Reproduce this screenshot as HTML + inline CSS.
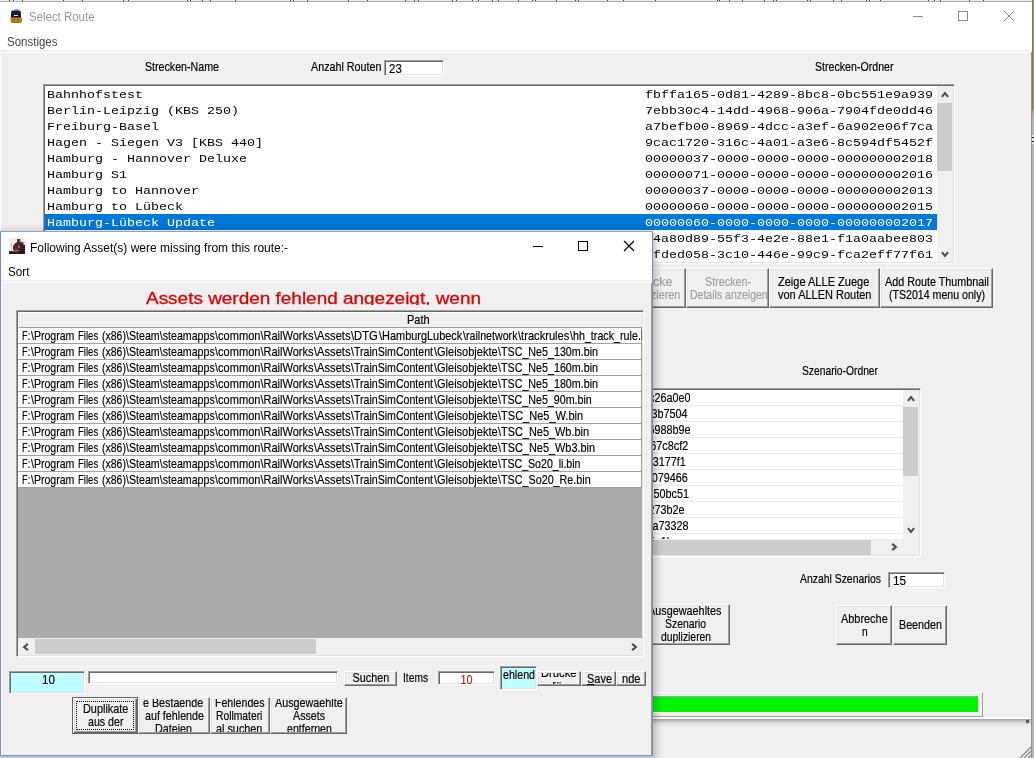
<!DOCTYPE html>
<html lang="de"><head><meta charset="utf-8"><title>Select Route</title>
<style>
html,body{margin:0;padding:0}
body{width:1034px;height:758px;overflow:hidden;background:#f0f0f0;position:relative;font-family:'Liberation Sans',sans-serif;color:#000}
div,span.t,svg{position:absolute;box-sizing:border-box}
.t{white-space:pre;-webkit-text-stroke:.2px currentColor}
.sunk{border:1px solid;border-color:#a0a0a0 #fff #fff #a0a0a0;box-shadow:inset 1px 1px 0 #696969,inset -1px -1px 0 #e3e3e3}
.btn{background:#f0f0f0;border:1px solid;border-color:#fff #696969 #696969 #fff;box-shadow:inset -1px -1px 0 #a0a0a0,inset 1px 1px 0 #e3e3e3}
.btn.def{border-color:#646464;box-shadow:inset 1px 1px 0 #fff,inset -1px -1px 0 #696969,inset -2px -2px 0 #a0a0a0,inset 2px 2px 0 #e3e3e3}
</style></head>
<body>
<div style="left:0;top:0;width:1034px;height:758px;will-change:transform">
<div style="left:0px;top:0px;width:1034px;height:2px;background:#fff"></div>
<div style="left:0px;top:0px;width:1032px;height:1px;background:#ececec"></div>
<div style="left:0px;top:1px;width:1032px;height:1px;background:#adadb3"></div>
<div style="left:9px;top:0px;width:1px;height:1px;background:#444"></div>
<div style="left:13px;top:0px;width:1px;height:1px;background:#444"></div>
<div style="left:22px;top:0px;width:1px;height:1px;background:#444"></div>
<div style="left:63px;top:0px;width:1px;height:1px;background:#444"></div>
<div style="left:82px;top:0px;width:1px;height:1px;background:#444"></div>
<div style="left:123px;top:0px;width:1px;height:1px;background:#444"></div>
<div style="left:128px;top:0px;width:1px;height:1px;background:#444"></div>
<div style="left:187px;top:0px;width:1px;height:1px;background:#444"></div>
<div style="left:190px;top:0px;width:1px;height:1px;background:#444"></div>
<div style="left:202px;top:0px;width:1px;height:1px;background:#444"></div>
<div style="left:210px;top:0px;width:1px;height:1px;background:#444"></div>
<div style="left:235px;top:0px;width:1px;height:1px;background:#444"></div>
<div style="left:290px;top:0px;width:1px;height:1px;background:#444"></div>
<div style="left:293px;top:0px;width:1px;height:1px;background:#444"></div>
<div style="left:307px;top:0px;width:1px;height:1px;background:#444"></div>
<div style="left:348px;top:0px;width:1px;height:1px;background:#444"></div>
<div style="left:367px;top:0px;width:1px;height:1px;background:#444"></div>
<div style="left:405px;top:0px;width:1px;height:1px;background:#444"></div>
<div style="left:414px;top:0px;width:1px;height:1px;background:#444"></div>
<div style="left:418px;top:0px;width:1px;height:1px;background:#444"></div>
<div style="left:452px;top:0px;width:1px;height:1px;background:#444"></div>
<div style="left:456px;top:0px;width:1px;height:1px;background:#444"></div>
<div style="left:472px;top:0px;width:1px;height:1px;background:#444"></div>
<div style="left:478px;top:0px;width:1px;height:1px;background:#444"></div>
<div style="left:492px;top:0px;width:1px;height:1px;background:#444"></div>
<div style="left:498px;top:0px;width:1px;height:1px;background:#444"></div>
<div style="left:518px;top:0px;width:1px;height:1px;background:#444"></div>
<div style="left:532px;top:0px;width:1px;height:1px;background:#444"></div>
<div style="left:535px;top:0px;width:1px;height:1px;background:#444"></div>
<div style="left:556px;top:0px;width:1px;height:1px;background:#444"></div>
<div style="left:575px;top:0px;width:1px;height:1px;background:#444"></div>
<div style="left:578px;top:0px;width:1px;height:1px;background:#444"></div>
<div style="left:607px;top:0px;width:1px;height:1px;background:#444"></div>
<div style="left:623px;top:0px;width:1px;height:1px;background:#444"></div>
<div style="left:655px;top:0px;width:1px;height:1px;background:#444"></div>
<div style="left:717px;top:0px;width:1px;height:1px;background:#444"></div>
<div style="left:719px;top:0px;width:1px;height:1px;background:#444"></div>
<div style="left:729px;top:0px;width:1px;height:1px;background:#444"></div>
<div style="left:742px;top:0px;width:1px;height:1px;background:#444"></div>
<div style="left:764px;top:0px;width:1px;height:1px;background:#444"></div>
<div style="left:773px;top:0px;width:1px;height:1px;background:#444"></div>
<div style="left:776px;top:0px;width:1px;height:1px;background:#444"></div>
<div style="left:807px;top:0px;width:1px;height:1px;background:#444"></div>
<div style="left:810px;top:0px;width:1px;height:1px;background:#444"></div>
<div style="left:833px;top:0px;width:1px;height:1px;background:#444"></div>
<div style="left:841px;top:0px;width:1px;height:1px;background:#444"></div>
<div style="left:866px;top:0px;width:1px;height:1px;background:#444"></div>
<div style="left:869px;top:0px;width:1px;height:1px;background:#444"></div>
<div style="left:880px;top:0px;width:1px;height:1px;background:#444"></div>
<div style="left:928px;top:0px;width:1px;height:1px;background:#444"></div>
<div style="left:934px;top:0px;width:1px;height:1px;background:#444"></div>
<div style="left:940px;top:0px;width:1px;height:1px;background:#444"></div>
<div style="left:969px;top:0px;width:1px;height:1px;background:#444"></div>
<div style="left:983px;top:0px;width:1px;height:1px;background:#444"></div>
<div style="left:0px;top:2px;width:1032px;height:48px;background:#fff"></div>
<div style="left:0px;top:50px;width:1031px;height:2px;background:#f2f2f2"></div>
<div style="left:0px;top:52px;width:1031px;height:1px;background:#fcfcfc"></div>
<div style="left:0px;top:52px;width:1px;height:667px;background:#fafafa"></div>
<div style="left:1032px;top:0px;width:2px;height:758px;background:linear-gradient(#a3976c 0,#a3976c 104px,#b6b6b6 122px,#b6b6b6 100%)"></div>
<div style="left:1032px;top:0px;width:1px;height:110px;background:#7f7653"></div>
<div style="left:1031px;top:52px;width:1px;height:706px;background:#929292"></div>
<div style="left:1032px;top:135px;width:2px;height:9px;background:#e8e8e8"></div>
<div style="left:1032px;top:137px;width:2px;height:1px;background:#111"></div>
<div style="left:1032px;top:141px;width:2px;height:1px;background:#111"></div>
<svg style="left:10px;top:9px" width="13" height="15" viewBox="0 0 13 15"><rect x="4" y="0" width="5" height="2.5" rx="1" fill="#a9adb8"/><path d="M1 3.5Q1 1.6 3 1.6H9Q11 1.6 11 3.5V8.5H1z" fill="#141d47"/><rect x="0.5" y="8" width="11.5" height="5.6" rx="1.2" fill="#bf881c"/><rect x="1.5" y="13" width="9.5" height="1" fill="#6b4a12" opacity=".7"/><circle cx="3.7" cy="11" r="1.1" fill="#8a5308"/><circle cx="8.2" cy="11" r="1.1" fill="#8a5308"/><rect x="4" y="6" width="4" height="1" fill="#e3e6ee"/><rect x="1" y="7.5" width="10" height="1" fill="#0c1230"/></svg>
<span class="t" style="left:29.00px;top:11.14px;font-size:12px;line-height:13.40px;color:#999;-webkit-text-stroke:0;transform:scaleX(0.9532);transform-origin:0 0;">Select Route</span><span class="t" style="left:7.00px;top:36.14px;font-size:12px;line-height:13.40px;color:#444;-webkit-text-stroke:0;transform:scaleX(0.9582);transform-origin:0 0;">Sonstiges</span><svg style="left:905px;top:4px" width="120" height="26" viewBox="0 0 120 26"><g stroke="#8a8a8a" stroke-width="1" fill="none"><path d="M8 12.5H18"/><rect x="53.5" y="7.5" width="9" height="9"/><path d="M99 7L109 17M109 7L99 17"/></g></svg>
<span class="t" style="left:144.50px;top:58.78px;font-size:13.5px;line-height:15.08px;transform:scaleX(0.7889);transform-origin:0 0;">Strecken-Name</span><span class="t" style="left:310.50px;top:58.78px;font-size:13.5px;line-height:15.08px;transform:scaleX(0.7960);transform-origin:0 0;">Anzahl Routen</span><span class="t" style="left:815.00px;top:58.78px;font-size:13.5px;line-height:15.08px;transform:scaleX(0.7866);transform-origin:0 0;">Strecken-Ordner</span><div class="sunk" style="left:384px;top:60px;width:60px;height:16px;background:#fff;"></div>
<span class="t" style="left:389.00px;top:60.78px;font-size:13.5px;line-height:15.08px;transform:scaleX(0.8516);transform-origin:0 0;">23</span><div class="sunk" style="left:43px;top:84px;width:912px;height:180px;background:#fff;"></div>
<div style="left:45px;top:86px;width:892px;height:176px;overflow:hidden;"><span class="t" style="left:2.00px;top:2.34px;font-size:11.6px;line-height:13.14px;font-family:'Liberation Mono',monospace;-webkit-text-stroke:0;transform:scaleX(1.1494);transform-origin:0 0;">Bahnhofstest</span><span class="t" style="left:600.00px;top:2.34px;font-size:11.6px;line-height:13.14px;font-family:'Liberation Mono',monospace;-webkit-text-stroke:0;transform:scaleX(1.1494);transform-origin:0 0;">fbffa165-0d81-4289-8bc8-0bc551e9a939</span><span class="t" style="left:2.00px;top:18.34px;font-size:11.6px;line-height:13.14px;font-family:'Liberation Mono',monospace;-webkit-text-stroke:0;transform:scaleX(1.1494);transform-origin:0 0;">Berlin-Leipzig (KBS 250)</span><span class="t" style="left:600.00px;top:18.34px;font-size:11.6px;line-height:13.14px;font-family:'Liberation Mono',monospace;-webkit-text-stroke:0;transform:scaleX(1.1494);transform-origin:0 0;">7ebb30c4-14dd-4968-906a-7904fde0dd46</span><span class="t" style="left:2.00px;top:34.34px;font-size:11.6px;line-height:13.14px;font-family:'Liberation Mono',monospace;-webkit-text-stroke:0;transform:scaleX(1.1494);transform-origin:0 0;">Freiburg-Basel</span><span class="t" style="left:600.00px;top:34.34px;font-size:11.6px;line-height:13.14px;font-family:'Liberation Mono',monospace;-webkit-text-stroke:0;transform:scaleX(1.1494);transform-origin:0 0;">a7befb00-8969-4dcc-a3ef-6a902e06f7ca</span><span class="t" style="left:2.00px;top:50.34px;font-size:11.6px;line-height:13.14px;font-family:'Liberation Mono',monospace;-webkit-text-stroke:0;transform:scaleX(1.1494);transform-origin:0 0;">Hagen - Siegen V3 [KBS 440]</span><span class="t" style="left:600.00px;top:50.34px;font-size:11.6px;line-height:13.14px;font-family:'Liberation Mono',monospace;-webkit-text-stroke:0;transform:scaleX(1.1494);transform-origin:0 0;">9cac1720-316c-4a01-a3e6-8c594df5452f</span><span class="t" style="left:2.00px;top:66.34px;font-size:11.6px;line-height:13.14px;font-family:'Liberation Mono',monospace;-webkit-text-stroke:0;transform:scaleX(1.1494);transform-origin:0 0;">Hamburg - Hannover Deluxe</span><span class="t" style="left:600.00px;top:66.34px;font-size:11.6px;line-height:13.14px;font-family:'Liberation Mono',monospace;-webkit-text-stroke:0;transform:scaleX(1.1494);transform-origin:0 0;">00000037-0000-0000-0000-000000002018</span><span class="t" style="left:2.00px;top:82.34px;font-size:11.6px;line-height:13.14px;font-family:'Liberation Mono',monospace;-webkit-text-stroke:0;transform:scaleX(1.1494);transform-origin:0 0;">Hamburg S1</span><span class="t" style="left:600.00px;top:82.34px;font-size:11.6px;line-height:13.14px;font-family:'Liberation Mono',monospace;-webkit-text-stroke:0;transform:scaleX(1.1494);transform-origin:0 0;">00000071-0000-0000-0000-000000002016</span><span class="t" style="left:2.00px;top:98.34px;font-size:11.6px;line-height:13.14px;font-family:'Liberation Mono',monospace;-webkit-text-stroke:0;transform:scaleX(1.1494);transform-origin:0 0;">Hamburg to Hannover</span><span class="t" style="left:600.00px;top:98.34px;font-size:11.6px;line-height:13.14px;font-family:'Liberation Mono',monospace;-webkit-text-stroke:0;transform:scaleX(1.1494);transform-origin:0 0;">00000037-0000-0000-0000-000000002013</span><span class="t" style="left:2.00px;top:114.34px;font-size:11.6px;line-height:13.14px;font-family:'Liberation Mono',monospace;-webkit-text-stroke:0;transform:scaleX(1.1494);transform-origin:0 0;">Hamburg to Lübeck</span><span class="t" style="left:600.00px;top:114.34px;font-size:11.6px;line-height:13.14px;font-family:'Liberation Mono',monospace;-webkit-text-stroke:0;transform:scaleX(1.1494);transform-origin:0 0;">00000060-0000-0000-0000-000000002015</span><div style="left:0px;top:128px;width:892px;height:16px;background:#0078d7"></div>
<span class="t" style="left:2.00px;top:130.34px;font-size:11.6px;line-height:13.14px;color:#fff;font-family:'Liberation Mono',monospace;-webkit-text-stroke:0;transform:scaleX(1.1494);transform-origin:0 0;">Hamburg-Lübeck Update</span><span class="t" style="left:600.00px;top:130.34px;font-size:11.6px;line-height:13.14px;color:#fff;font-family:'Liberation Mono',monospace;-webkit-text-stroke:0;transform:scaleX(1.1494);transform-origin:0 0;">00000060-0000-0000-0000-000000002017</span><span class="t" style="left:2.00px;top:146.34px;font-size:11.6px;line-height:13.14px;font-family:'Liberation Mono',monospace;-webkit-text-stroke:0;transform:scaleX(1.1494);transform-origin:0 0;">Köln - Düsseldorf</span><span class="t" style="left:600.00px;top:146.34px;font-size:11.6px;line-height:13.14px;font-family:'Liberation Mono',monospace;-webkit-text-stroke:0;transform:scaleX(1.1494);transform-origin:0 0;">c4a80d89-55f3-4e2e-88e1-f1a0aabee803</span><span class="t" style="left:2.00px;top:162.34px;font-size:11.6px;line-height:13.14px;font-family:'Liberation Mono',monospace;-webkit-text-stroke:0;transform:scaleX(1.1494);transform-origin:0 0;">Mannheim - Karlsruhe</span><span class="t" style="left:600.00px;top:162.34px;font-size:11.6px;line-height:13.14px;font-family:'Liberation Mono',monospace;-webkit-text-stroke:0;transform:scaleX(1.1494);transform-origin:0 0;">5fded058-3c10-446e-99c9-fca2eff77f61</span></div>
<div style="left:937px;top:86px;width:16px;height:176px;background:#f0f0f0"></div>
<div style="left:937px;top:103px;width:15px;height:68px;background:#cdcdcd"></div>
<svg style="left:936.7px;top:87px" width="16" height="16" viewBox="0 0 16 16"><polyline points="4.90,9.90 8.00,6.10 11.10,9.90" fill="none" stroke="#505050" stroke-width="2.1"/></svg>
<svg style="left:936.6px;top:246px" width="16" height="16" viewBox="0 0 16 16"><polyline points="4.90,6.10 8.00,9.90 11.10,6.10" fill="none" stroke="#505050" stroke-width="2.1"/></svg>
<div class="btn" style="left:618px;top:268px;width:68px;height:40px;"></div>
<div style="left:620px;top:270px;width:64px;height:36px;overflow:hidden;"><span class="t" style="left:10.00px;top:3.78px;font-size:13.5px;line-height:15.08px;color:#a0a0a0;transform:scaleX(0.9305);transform-origin:0 0;">Strecke</span><span class="t" style="left:-5.30px;top:16.78px;font-size:13.5px;line-height:15.08px;color:#a0a0a0;transform:scaleX(0.8000);transform-origin:100% 0;">duplizieren</span></div>
<div class="btn" style="left:686px;top:268px;width:83px;height:40px;"></div>
<div style="left:688px;top:270px;width:79px;height:36px;overflow:hidden;"><span class="t" style="left:17.20px;top:3.78px;font-size:13.5px;line-height:15.08px;color:#a0a0a0;transform:scaleX(0.7978);transform-origin:0 0;">Strecken-</span><span class="t" style="left:1.50px;top:16.78px;font-size:13.5px;line-height:15.08px;color:#a0a0a0;transform:scaleX(0.7783);transform-origin:0 0;">Details anzeigen</span></div>
<div class="btn" style="left:769px;top:268px;width:111px;height:40px;"></div>
<div style="left:771px;top:270px;width:107px;height:36px;overflow:hidden;"><span class="t" style="left:7.30px;top:3.78px;font-size:13.5px;line-height:15.08px;transform:scaleX(0.8163);transform-origin:0 0;">Zeige ALLE Zuege</span><span class="t" style="left:7.30px;top:16.78px;font-size:13.5px;line-height:15.08px;transform:scaleX(0.8133);transform-origin:0 0;">von ALLEN Routen</span></div>
<div class="btn" style="left:880px;top:268px;width:113px;height:40px;"></div>
<div style="left:882px;top:270px;width:109px;height:36px;overflow:hidden;"><span class="t" style="left:3.00px;top:3.78px;font-size:13.5px;line-height:15.08px;transform:scaleX(0.7979);transform-origin:0 0;">Add Route Thumbnail</span><span class="t" style="left:7.00px;top:16.78px;font-size:13.5px;line-height:15.08px;transform:scaleX(0.7849);transform-origin:0 0;">(TS2014 menu only)</span></div>
<span class="t" style="left:801.50px;top:362.78px;font-size:13.5px;line-height:15.08px;transform:scaleX(0.7615);transform-origin:0 0;">Szenario-Ordner</span><div class="sunk" style="left:330px;top:388px;width:591px;height:169px;background:#fff;"></div>
<div style="left:332px;top:390px;width:571px;height:149px;overflow:hidden;"><div style="left:0px;top:0px;width:571px;height:149px;background:#fff"></div>
<div style="left:0px;top:15px;width:571px;height:1px;background:#ebebeb"></div>
<span class="t" style="left:128.06px;top:-0.22px;font-size:13.5px;line-height:15.08px;transform:scaleX(0.8000);transform-origin:100% 0;">8f3e2a10-4b5c-4d6e-9f70-7f1c26a0e0</span><div style="left:0px;top:31px;width:571px;height:1px;background:#ebebeb"></div>
<span class="t" style="left:128.05px;top:15.78px;font-size:13.5px;line-height:15.08px;transform:scaleX(0.8000);transform-origin:100% 0;">8f3e2a10-4b5c-4d6e-9f70-d9a3b7504</span><div style="left:0px;top:47px;width:571px;height:1px;background:#ebebeb"></div>
<span class="t" style="left:131.05px;top:31.78px;font-size:13.5px;line-height:15.08px;transform:scaleX(0.8000);transform-origin:100% 0;">8f3e2a10-4b5c-4d6e-9f70-a06988b9e</span><div style="left:0px;top:63px;width:571px;height:1px;background:#ebebeb"></div>
<span class="t" style="left:133.83px;top:47.78px;font-size:13.5px;line-height:15.08px;transform:scaleX(0.8000);transform-origin:100% 0;">8f3e2a10-4b5c-4d6e-9f70-e267c8cf2</span><div style="left:0px;top:79px;width:571px;height:1px;background:#ebebeb"></div>
<span class="t" style="left:130.31px;top:63.78px;font-size:13.5px;line-height:15.08px;transform:scaleX(0.8000);transform-origin:100% 0;">8f3e2a10-4b5c-4d6e-9f70-b723177f1</span><div style="left:0px;top:95px;width:571px;height:1px;background:#ebebeb"></div>
<span class="t" style="left:129.31px;top:79.78px;font-size:13.5px;line-height:15.08px;transform:scaleX(0.8000);transform-origin:100% 0;">8f3e2a10-4b5c-4d6e-9f70-4c1079466</span><div style="left:0px;top:111px;width:571px;height:1px;background:#ebebeb"></div>
<span class="t" style="left:134.06px;top:95.78px;font-size:13.5px;line-height:15.08px;transform:scaleX(0.8000);transform-origin:100% 0;">8f3e2a10-4b5c-4d6e-9f70-fe150bc51</span><div style="left:0px;top:127px;width:571px;height:1px;background:#ebebeb"></div>
<span class="t" style="left:125.05px;top:111.78px;font-size:13.5px;line-height:15.08px;transform:scaleX(0.8000);transform-origin:100% 0;">8f3e2a10-4b5c-4d6e-9f70-09a273b2e</span><div style="left:0px;top:143px;width:571px;height:1px;background:#ebebeb"></div>
<span class="t" style="left:128.55px;top:127.78px;font-size:13.5px;line-height:15.08px;transform:scaleX(0.8000);transform-origin:100% 0;">8f3e2a10-4b5c-4d6e-9f70-5d1a73328</span><div style="left:0px;top:159px;width:571px;height:1px;background:#ebebeb"></div>
<span class="t" style="left:117.31px;top:143.78px;font-size:13.5px;line-height:15.08px;transform:scaleX(0.8000);transform-origin:100% 0;">8f3e2a10-4b5c-4d6e-9f70-0c2a-5e1b</span></div>
<div style="left:903px;top:390px;width:16px;height:149px;background:#f0f0f0"></div>
<div style="left:903px;top:407px;width:15px;height:69px;background:#cdcdcd"></div>
<svg style="left:902.6px;top:391px" width="16" height="16" viewBox="0 0 16 16"><polyline points="4.90,9.90 8.00,6.10 11.10,9.90" fill="none" stroke="#505050" stroke-width="2.1"/></svg>
<svg style="left:902.6px;top:522px" width="16" height="16" viewBox="0 0 16 16"><polyline points="4.90,6.10 8.00,9.90 11.10,6.10" fill="none" stroke="#505050" stroke-width="2.1"/></svg>
<div style="left:332px;top:539px;width:587px;height:16px;background:#f0f0f0"></div>
<div style="left:349px;top:540px;width:522px;height:15px;background:#cdcdcd"></div>
<svg style="left:886px;top:538.6px" width="16" height="16" viewBox="0 0 16 16"><polyline points="6.10,4.90 9.90,8.00 6.10,11.10" fill="none" stroke="#505050" stroke-width="2.1"/></svg>
<span class="t" style="left:800.00px;top:570.78px;font-size:13.5px;line-height:15.08px;transform:scaleX(0.7710);transform-origin:0 0;">Anzahl Szenarios</span><div class="sunk" style="left:888px;top:572px;width:57px;height:16px;background:#fff;"></div>
<span class="t" style="left:893.00px;top:572.78px;font-size:13.5px;line-height:15.08px;transform:scaleX(0.8782);transform-origin:0 0;">15</span><div class="btn" style="left:640px;top:604px;width:90px;height:41px;"></div>
<div style="left:642px;top:606px;width:86px;height:37px;overflow:hidden;"><span class="t" style="left:6.30px;top:-3.22px;font-size:13.5px;line-height:15.08px;transform:scaleX(0.8027);transform-origin:0 0;">Ausgewaehltes</span><span class="t" style="left:22.50px;top:9.78px;font-size:13.5px;line-height:15.08px;transform:scaleX(0.7712);transform-origin:0 0;">Szenario</span><span class="t" style="left:18.60px;top:22.78px;font-size:13.5px;line-height:15.08px;transform:scaleX(0.7673);transform-origin:0 0;">duplizieren</span></div>
<div class="btn" style="left:836px;top:605px;width:56px;height:40px;"></div>
<div style="left:838px;top:607px;width:52px;height:36px;overflow:hidden;"><span class="t" style="left:2.80px;top:3.78px;font-size:13.5px;line-height:15.08px;transform:scaleX(0.8080);transform-origin:0 0;">Abbreche</span><span class="t" style="left:23.50px;top:16.78px;font-size:13.5px;line-height:15.08px;transform:scaleX(0.7584);transform-origin:0 0;">n</span></div>
<div class="btn" style="left:893px;top:605px;width:54px;height:40px;"></div>
<div style="left:895px;top:607px;width:50px;height:36px;overflow:hidden;"><span class="t" style="left:3.50px;top:9.78px;font-size:13.5px;line-height:15.08px;transform:scaleX(0.7935);transform-origin:0 0;">Beenden</span></div>
<div style="left:500px;top:692px;width:483px;height:25px;border:1px solid;border-color:#fff #a0a0a0 #a0a0a0 #fff"></div>
<div style="left:504px;top:696px;width:475px;height:17px;border:1px solid;border-color:#a0a0a0 #fff #fff #a0a0a0;background:#00f400"></div>
<div style="left:1px;top:717px;width:1030px;height:2px;background:#fbfbfb"></div>
<div style="left:0px;top:719px;width:1031px;height:8px;background:linear-gradient(#9c9c9c,#c6c6c6 25%,#e2e2e2 60%,#f0f0f0)"></div>
<div style="left:1026px;top:720px;width:3px;height:3px;background:#5a5a5a"></div>
<svg style="left:1019px;top:745px" width="12" height="13" viewBox="0 0 12 13"><g stroke="#8e8e8e" stroke-width="1.4"><path d="M1 13L12 2M5 13L12 6M9 13L12 10"/></g></svg>
<div style="left:653px;top:233px;width:10px;height:525px;background:linear-gradient(90deg,rgba(0,0,0,.2),rgba(0,0,0,.1) 35%,rgba(0,0,0,.03) 70%,rgba(0,0,0,0))"></div>
<div style="left:0px;top:756px;width:653px;height:2px;background:#b6c7e6"></div>
<div style="left:1px;top:223px;width:653px;height:8px;background:linear-gradient(rgba(0,0,0,0),rgba(0,0,0,.035) 50%,rgba(0,0,0,.11))"></div>
<div style="left:0px;top:0px;width:1034px;height:758px;"><div style="left:0px;top:231px;width:653px;height:525px;background:#f0f0f0;border:1px solid #7a90b2;border-top-color:#93a3bb"></div>
<div style="left:1px;top:232px;width:651px;height:48px;background:#fff"></div>
<div style="left:1px;top:280px;width:651px;height:2px;background:#f2f2f2"></div>
<div style="left:1px;top:282px;width:651px;height:1px;background:#fcfcfc"></div>
<div style="left:1px;top:283px;width:1px;height:472px;background:#fff"></div>
<div style="left:651px;top:283px;width:1px;height:472px;background:#9a9a9a"></div>
<svg style="left:9px;top:238px" width="16" height="16" viewBox="0 0 16 16"><rect width="16" height="16" fill="#f0ece6"/><rect x="2" y="5" width="1" height="9" fill="#cfc9c4"/><rect x="8" y="1" width="3.4" height="4" fill="#5b3b36"/><ellipse cx="10.3" cy="10" rx="6.3" ry="6.2" fill="#4b2228"/><rect x="11" y="4.5" width="5" height="11.5" fill="#3d1c20"/><path d="M11 4.5L16 4v3z" fill="#6b5230"/><rect x="0" y="13.2" width="16" height="2.8" fill="#2a1217"/><path d="M3 13.5l4-2.5 4 1-3 2.5z" fill="#8a4652"/><circle cx="10" cy="8.8" r="1.3" fill="#6c6f6a"/><rect x="14.5" y="4" width="1.5" height="3" fill="#e8d8dc"/></svg>
<span class="t" style="left:30.00px;top:241.54px;font-size:12px;line-height:13.40px;-webkit-text-stroke:0;">Following Asset(s) were missing from this route:-</span><span class="t" style="left:8.00px;top:265.64px;font-size:12px;line-height:13.40px;-webkit-text-stroke:0;transform:scaleX(0.9766);transform-origin:0 0;">Sort</span><svg style="left:525px;top:236px" width="120" height="26" viewBox="0 0 120 26"><g stroke="#000" stroke-width="1" fill="none"><path d="M8 10.5H18"/><rect x="53.5" y="5.5" width="9" height="9"/><path d="M99 5L109 15M109 5L99 15" stroke-width="1.15"/></g></svg>
<div style="left:20px;top:286px;width:620px;height:19px;overflow:hidden;"><span class="t" style="left:125.50px;top:3.43px;font-size:17.2px;line-height:19.21px;color:#dc0000;transform:scaleX(1.1025);transform-origin:0 0;-webkit-text-stroke:0.3px #dc0000;">Assets werden fehlend angezeigt, wenn</span></div>
<div class="sunk" style="left:16px;top:310px;width:628px;height:347px;background:#ababab;"></div>
<div style="left:18px;top:312px;width:624px;height:343px;overflow:hidden;"><div style="left:0px;top:0px;width:624px;height:16px;background:#f0f0f0;border-bottom:1px solid #a0a0a0;border-top:1px solid #fff;border-left:1px solid #fff"></div>
<span class="t" style="left:389.30px;top:-0.22px;font-size:13.5px;line-height:15.08px;transform:scaleX(0.8171);transform-origin:0 0;">Path</span><div style="left:0px;top:16px;width:624px;height:16px;background:#fff;border-bottom:1px solid #a0a0a0;border-right:1px solid #a0a0a0"></div>
<span class="t" style="left:3.50px;top:15.78px;font-size:13.5px;line-height:15.08px;transform:scaleX(0.6833);transform-origin:0 0;">F:</span><span class="t" style="left:12.50px;top:15.78px;font-size:13.5px;line-height:15.08px;transform:scaleX(0.7815);transform-origin:0 0;">\Program</span><span class="t" style="left:59.70px;top:15.78px;font-size:13.5px;line-height:15.08px;transform:scaleX(0.7084);transform-origin:0 0;">Files</span><span class="t" style="left:83.70px;top:15.78px;font-size:13.5px;line-height:15.08px;transform:scaleX(0.7768);transform-origin:0 0;">(x86)</span><span class="t" style="left:107.80px;top:15.78px;font-size:13.5px;line-height:15.08px;transform:scaleX(0.7889);transform-origin:0 0;">\Steam\steamapps</span><span class="t" style="left:197.00px;top:15.78px;font-size:13.5px;line-height:15.08px;transform:scaleX(0.8180);transform-origin:0 0;">\common\RailWorks</span><span class="t" style="left:295.90px;top:15.78px;font-size:13.5px;line-height:15.08px;transform:scaleX(0.8246);transform-origin:0 0;">\Assets</span><span class="t" style="left:333.20px;top:15.78px;font-size:13.5px;line-height:15.08px;transform:scaleX(0.8310);transform-origin:0 0;">\DTG</span><span class="t" style="left:360.70px;top:15.78px;font-size:13.5px;line-height:15.08px;transform:scaleX(0.8102);transform-origin:0 0;">\HamburgLubeck</span><span class="t" style="left:444.80px;top:15.78px;font-size:13.5px;line-height:15.08px;transform:scaleX(0.7895);transform-origin:0 0;">\railnetwork</span><span class="t" style="left:500.30px;top:15.78px;font-size:13.5px;line-height:15.08px;transform:scaleX(0.8237);transform-origin:0 0;">\trackrules</span><span class="t" style="left:552.10px;top:15.78px;font-size:13.5px;line-height:15.08px;transform:scaleX(0.7938);transform-origin:0 0;">\hh_track_rule.</span><span class="t" style="left:623.40px;top:15.78px;font-size:13.5px;line-height:15.08px;transform:scaleX(0.8659);transform-origin:0 0;">bin</span><div style="left:0px;top:32px;width:624px;height:16px;background:#fff;border-bottom:1px solid #a0a0a0;border-right:1px solid #a0a0a0"></div>
<span class="t" style="left:3.50px;top:31.78px;font-size:13.5px;line-height:15.08px;transform:scaleX(0.6833);transform-origin:0 0;">F:</span><span class="t" style="left:12.50px;top:31.78px;font-size:13.5px;line-height:15.08px;transform:scaleX(0.7815);transform-origin:0 0;">\Program</span><span class="t" style="left:59.70px;top:31.78px;font-size:13.5px;line-height:15.08px;transform:scaleX(0.7084);transform-origin:0 0;">Files</span><span class="t" style="left:83.70px;top:31.78px;font-size:13.5px;line-height:15.08px;transform:scaleX(0.7768);transform-origin:0 0;">(x86)</span><span class="t" style="left:107.80px;top:31.78px;font-size:13.5px;line-height:15.08px;transform:scaleX(0.7889);transform-origin:0 0;">\Steam\steamapps</span><span class="t" style="left:197.00px;top:31.78px;font-size:13.5px;line-height:15.08px;transform:scaleX(0.8180);transform-origin:0 0;">\common\RailWorks</span><span class="t" style="left:295.90px;top:31.78px;font-size:13.5px;line-height:15.08px;transform:scaleX(0.8246);transform-origin:0 0;">\Assets</span><span class="t" style="left:333.20px;top:31.78px;font-size:13.5px;line-height:15.08px;transform:scaleX(0.7843);transform-origin:0 0;">\TrainSimContent</span><span class="t" style="left:415.50px;top:31.78px;font-size:13.5px;line-height:15.08px;transform:scaleX(0.8149);transform-origin:0 0;">\Gleisobjekte</span><span class="t" style="left:479.50px;top:31.78px;font-size:13.5px;line-height:15.08px;transform:scaleX(0.7932);transform-origin:0 0;">\TSC_Ne5_130m.bin</span><div style="left:0px;top:48px;width:624px;height:16px;background:#fff;border-bottom:1px solid #a0a0a0;border-right:1px solid #a0a0a0"></div>
<span class="t" style="left:3.50px;top:47.78px;font-size:13.5px;line-height:15.08px;transform:scaleX(0.6833);transform-origin:0 0;">F:</span><span class="t" style="left:12.50px;top:47.78px;font-size:13.5px;line-height:15.08px;transform:scaleX(0.7815);transform-origin:0 0;">\Program</span><span class="t" style="left:59.70px;top:47.78px;font-size:13.5px;line-height:15.08px;transform:scaleX(0.7084);transform-origin:0 0;">Files</span><span class="t" style="left:83.70px;top:47.78px;font-size:13.5px;line-height:15.08px;transform:scaleX(0.7768);transform-origin:0 0;">(x86)</span><span class="t" style="left:107.80px;top:47.78px;font-size:13.5px;line-height:15.08px;transform:scaleX(0.7889);transform-origin:0 0;">\Steam\steamapps</span><span class="t" style="left:197.00px;top:47.78px;font-size:13.5px;line-height:15.08px;transform:scaleX(0.8180);transform-origin:0 0;">\common\RailWorks</span><span class="t" style="left:295.90px;top:47.78px;font-size:13.5px;line-height:15.08px;transform:scaleX(0.8246);transform-origin:0 0;">\Assets</span><span class="t" style="left:333.20px;top:47.78px;font-size:13.5px;line-height:15.08px;transform:scaleX(0.7843);transform-origin:0 0;">\TrainSimContent</span><span class="t" style="left:415.50px;top:47.78px;font-size:13.5px;line-height:15.08px;transform:scaleX(0.8149);transform-origin:0 0;">\Gleisobjekte</span><span class="t" style="left:479.50px;top:47.78px;font-size:13.5px;line-height:15.08px;transform:scaleX(0.7932);transform-origin:0 0;">\TSC_Ne5_160m.bin</span><div style="left:0px;top:64px;width:624px;height:16px;background:#fff;border-bottom:1px solid #a0a0a0;border-right:1px solid #a0a0a0"></div>
<span class="t" style="left:3.50px;top:63.78px;font-size:13.5px;line-height:15.08px;transform:scaleX(0.6833);transform-origin:0 0;">F:</span><span class="t" style="left:12.50px;top:63.78px;font-size:13.5px;line-height:15.08px;transform:scaleX(0.7815);transform-origin:0 0;">\Program</span><span class="t" style="left:59.70px;top:63.78px;font-size:13.5px;line-height:15.08px;transform:scaleX(0.7084);transform-origin:0 0;">Files</span><span class="t" style="left:83.70px;top:63.78px;font-size:13.5px;line-height:15.08px;transform:scaleX(0.7768);transform-origin:0 0;">(x86)</span><span class="t" style="left:107.80px;top:63.78px;font-size:13.5px;line-height:15.08px;transform:scaleX(0.7889);transform-origin:0 0;">\Steam\steamapps</span><span class="t" style="left:197.00px;top:63.78px;font-size:13.5px;line-height:15.08px;transform:scaleX(0.8180);transform-origin:0 0;">\common\RailWorks</span><span class="t" style="left:295.90px;top:63.78px;font-size:13.5px;line-height:15.08px;transform:scaleX(0.8246);transform-origin:0 0;">\Assets</span><span class="t" style="left:333.20px;top:63.78px;font-size:13.5px;line-height:15.08px;transform:scaleX(0.7843);transform-origin:0 0;">\TrainSimContent</span><span class="t" style="left:415.50px;top:63.78px;font-size:13.5px;line-height:15.08px;transform:scaleX(0.8149);transform-origin:0 0;">\Gleisobjekte</span><span class="t" style="left:479.50px;top:63.78px;font-size:13.5px;line-height:15.08px;transform:scaleX(0.7932);transform-origin:0 0;">\TSC_Ne5_180m.bin</span><div style="left:0px;top:80px;width:624px;height:16px;background:#fff;border-bottom:1px solid #a0a0a0;border-right:1px solid #a0a0a0"></div>
<span class="t" style="left:3.50px;top:79.78px;font-size:13.5px;line-height:15.08px;transform:scaleX(0.6833);transform-origin:0 0;">F:</span><span class="t" style="left:12.50px;top:79.78px;font-size:13.5px;line-height:15.08px;transform:scaleX(0.7815);transform-origin:0 0;">\Program</span><span class="t" style="left:59.70px;top:79.78px;font-size:13.5px;line-height:15.08px;transform:scaleX(0.7084);transform-origin:0 0;">Files</span><span class="t" style="left:83.70px;top:79.78px;font-size:13.5px;line-height:15.08px;transform:scaleX(0.7768);transform-origin:0 0;">(x86)</span><span class="t" style="left:107.80px;top:79.78px;font-size:13.5px;line-height:15.08px;transform:scaleX(0.7889);transform-origin:0 0;">\Steam\steamapps</span><span class="t" style="left:197.00px;top:79.78px;font-size:13.5px;line-height:15.08px;transform:scaleX(0.8180);transform-origin:0 0;">\common\RailWorks</span><span class="t" style="left:295.90px;top:79.78px;font-size:13.5px;line-height:15.08px;transform:scaleX(0.8246);transform-origin:0 0;">\Assets</span><span class="t" style="left:333.20px;top:79.78px;font-size:13.5px;line-height:15.08px;transform:scaleX(0.7843);transform-origin:0 0;">\TrainSimContent</span><span class="t" style="left:415.50px;top:79.78px;font-size:13.5px;line-height:15.08px;transform:scaleX(0.8149);transform-origin:0 0;">\Gleisobjekte</span><span class="t" style="left:479.50px;top:79.78px;font-size:13.5px;line-height:15.08px;transform:scaleX(0.7911);transform-origin:0 0;">\TSC_Ne5_90m.bin</span><div style="left:0px;top:96px;width:624px;height:16px;background:#fff;border-bottom:1px solid #a0a0a0;border-right:1px solid #a0a0a0"></div>
<span class="t" style="left:3.50px;top:95.78px;font-size:13.5px;line-height:15.08px;transform:scaleX(0.6833);transform-origin:0 0;">F:</span><span class="t" style="left:12.50px;top:95.78px;font-size:13.5px;line-height:15.08px;transform:scaleX(0.7815);transform-origin:0 0;">\Program</span><span class="t" style="left:59.70px;top:95.78px;font-size:13.5px;line-height:15.08px;transform:scaleX(0.7084);transform-origin:0 0;">Files</span><span class="t" style="left:83.70px;top:95.78px;font-size:13.5px;line-height:15.08px;transform:scaleX(0.7768);transform-origin:0 0;">(x86)</span><span class="t" style="left:107.80px;top:95.78px;font-size:13.5px;line-height:15.08px;transform:scaleX(0.7889);transform-origin:0 0;">\Steam\steamapps</span><span class="t" style="left:197.00px;top:95.78px;font-size:13.5px;line-height:15.08px;transform:scaleX(0.8180);transform-origin:0 0;">\common\RailWorks</span><span class="t" style="left:295.90px;top:95.78px;font-size:13.5px;line-height:15.08px;transform:scaleX(0.8246);transform-origin:0 0;">\Assets</span><span class="t" style="left:333.20px;top:95.78px;font-size:13.5px;line-height:15.08px;transform:scaleX(0.7843);transform-origin:0 0;">\TrainSimContent</span><span class="t" style="left:415.50px;top:95.78px;font-size:13.5px;line-height:15.08px;transform:scaleX(0.8149);transform-origin:0 0;">\Gleisobjekte</span><span class="t" style="left:479.50px;top:95.78px;font-size:13.5px;line-height:15.08px;transform:scaleX(0.8159);transform-origin:0 0;">\TSC_Ne5_W.bin</span><div style="left:0px;top:112px;width:624px;height:16px;background:#fff;border-bottom:1px solid #a0a0a0;border-right:1px solid #a0a0a0"></div>
<span class="t" style="left:3.50px;top:111.78px;font-size:13.5px;line-height:15.08px;transform:scaleX(0.6833);transform-origin:0 0;">F:</span><span class="t" style="left:12.50px;top:111.78px;font-size:13.5px;line-height:15.08px;transform:scaleX(0.7815);transform-origin:0 0;">\Program</span><span class="t" style="left:59.70px;top:111.78px;font-size:13.5px;line-height:15.08px;transform:scaleX(0.7084);transform-origin:0 0;">Files</span><span class="t" style="left:83.70px;top:111.78px;font-size:13.5px;line-height:15.08px;transform:scaleX(0.7768);transform-origin:0 0;">(x86)</span><span class="t" style="left:107.80px;top:111.78px;font-size:13.5px;line-height:15.08px;transform:scaleX(0.7889);transform-origin:0 0;">\Steam\steamapps</span><span class="t" style="left:197.00px;top:111.78px;font-size:13.5px;line-height:15.08px;transform:scaleX(0.8180);transform-origin:0 0;">\common\RailWorks</span><span class="t" style="left:295.90px;top:111.78px;font-size:13.5px;line-height:15.08px;transform:scaleX(0.8246);transform-origin:0 0;">\Assets</span><span class="t" style="left:333.20px;top:111.78px;font-size:13.5px;line-height:15.08px;transform:scaleX(0.7843);transform-origin:0 0;">\TrainSimContent</span><span class="t" style="left:415.50px;top:111.78px;font-size:13.5px;line-height:15.08px;transform:scaleX(0.8149);transform-origin:0 0;">\Gleisobjekte</span><span class="t" style="left:479.50px;top:111.78px;font-size:13.5px;line-height:15.08px;transform:scaleX(0.8084);transform-origin:0 0;">\TSC_Ne5_Wb.bin</span><div style="left:0px;top:128px;width:624px;height:16px;background:#fff;border-bottom:1px solid #a0a0a0;border-right:1px solid #a0a0a0"></div>
<span class="t" style="left:3.50px;top:127.78px;font-size:13.5px;line-height:15.08px;transform:scaleX(0.6833);transform-origin:0 0;">F:</span><span class="t" style="left:12.50px;top:127.78px;font-size:13.5px;line-height:15.08px;transform:scaleX(0.7815);transform-origin:0 0;">\Program</span><span class="t" style="left:59.70px;top:127.78px;font-size:13.5px;line-height:15.08px;transform:scaleX(0.7084);transform-origin:0 0;">Files</span><span class="t" style="left:83.70px;top:127.78px;font-size:13.5px;line-height:15.08px;transform:scaleX(0.7768);transform-origin:0 0;">(x86)</span><span class="t" style="left:107.80px;top:127.78px;font-size:13.5px;line-height:15.08px;transform:scaleX(0.7889);transform-origin:0 0;">\Steam\steamapps</span><span class="t" style="left:197.00px;top:127.78px;font-size:13.5px;line-height:15.08px;transform:scaleX(0.8180);transform-origin:0 0;">\common\RailWorks</span><span class="t" style="left:295.90px;top:127.78px;font-size:13.5px;line-height:15.08px;transform:scaleX(0.8246);transform-origin:0 0;">\Assets</span><span class="t" style="left:333.20px;top:127.78px;font-size:13.5px;line-height:15.08px;transform:scaleX(0.7843);transform-origin:0 0;">\TrainSimContent</span><span class="t" style="left:415.50px;top:127.78px;font-size:13.5px;line-height:15.08px;transform:scaleX(0.8149);transform-origin:0 0;">\Gleisobjekte</span><span class="t" style="left:479.50px;top:127.78px;font-size:13.5px;line-height:15.08px;transform:scaleX(0.8087);transform-origin:0 0;">\TSC_Ne5_Wb3.bin</span><div style="left:0px;top:144px;width:624px;height:16px;background:#fff;border-bottom:1px solid #a0a0a0;border-right:1px solid #a0a0a0"></div>
<span class="t" style="left:3.50px;top:143.78px;font-size:13.5px;line-height:15.08px;transform:scaleX(0.6833);transform-origin:0 0;">F:</span><span class="t" style="left:12.50px;top:143.78px;font-size:13.5px;line-height:15.08px;transform:scaleX(0.7815);transform-origin:0 0;">\Program</span><span class="t" style="left:59.70px;top:143.78px;font-size:13.5px;line-height:15.08px;transform:scaleX(0.7084);transform-origin:0 0;">Files</span><span class="t" style="left:83.70px;top:143.78px;font-size:13.5px;line-height:15.08px;transform:scaleX(0.7768);transform-origin:0 0;">(x86)</span><span class="t" style="left:107.80px;top:143.78px;font-size:13.5px;line-height:15.08px;transform:scaleX(0.7889);transform-origin:0 0;">\Steam\steamapps</span><span class="t" style="left:197.00px;top:143.78px;font-size:13.5px;line-height:15.08px;transform:scaleX(0.8180);transform-origin:0 0;">\common\RailWorks</span><span class="t" style="left:295.90px;top:143.78px;font-size:13.5px;line-height:15.08px;transform:scaleX(0.8246);transform-origin:0 0;">\Assets</span><span class="t" style="left:333.20px;top:143.78px;font-size:13.5px;line-height:15.08px;transform:scaleX(0.7843);transform-origin:0 0;">\TrainSimContent</span><span class="t" style="left:415.50px;top:143.78px;font-size:13.5px;line-height:15.08px;transform:scaleX(0.8149);transform-origin:0 0;">\Gleisobjekte</span><span class="t" style="left:479.50px;top:143.78px;font-size:13.5px;line-height:15.08px;transform:scaleX(0.7852);transform-origin:0 0;">\TSC_So20_li.bin</span><div style="left:0px;top:160px;width:624px;height:16px;background:#fff;border-bottom:1px solid #a0a0a0;border-right:1px solid #a0a0a0"></div>
<span class="t" style="left:3.50px;top:159.78px;font-size:13.5px;line-height:15.08px;transform:scaleX(0.6833);transform-origin:0 0;">F:</span><span class="t" style="left:12.50px;top:159.78px;font-size:13.5px;line-height:15.08px;transform:scaleX(0.7815);transform-origin:0 0;">\Program</span><span class="t" style="left:59.70px;top:159.78px;font-size:13.5px;line-height:15.08px;transform:scaleX(0.7084);transform-origin:0 0;">Files</span><span class="t" style="left:83.70px;top:159.78px;font-size:13.5px;line-height:15.08px;transform:scaleX(0.7768);transform-origin:0 0;">(x86)</span><span class="t" style="left:107.80px;top:159.78px;font-size:13.5px;line-height:15.08px;transform:scaleX(0.7889);transform-origin:0 0;">\Steam\steamapps</span><span class="t" style="left:197.00px;top:159.78px;font-size:13.5px;line-height:15.08px;transform:scaleX(0.8180);transform-origin:0 0;">\common\RailWorks</span><span class="t" style="left:295.90px;top:159.78px;font-size:13.5px;line-height:15.08px;transform:scaleX(0.8246);transform-origin:0 0;">\Assets</span><span class="t" style="left:333.20px;top:159.78px;font-size:13.5px;line-height:15.08px;transform:scaleX(0.7843);transform-origin:0 0;">\TrainSimContent</span><span class="t" style="left:415.50px;top:159.78px;font-size:13.5px;line-height:15.08px;transform:scaleX(0.8149);transform-origin:0 0;">\Gleisobjekte</span><span class="t" style="left:479.50px;top:159.78px;font-size:13.5px;line-height:15.08px;transform:scaleX(0.7969);transform-origin:0 0;">\TSC_So20_Re.bin</span><div style="left:0px;top:326px;width:624px;height:17px;background:#f0f0f0"></div>
<div style="left:17px;top:327px;width:281px;height:15px;background:#cdcdcd"></div>
<svg style="left:0px;top:326.5px" width="16" height="16" viewBox="0 0 16 16"><polyline points="9.90,4.90 6.10,8.00 9.90,11.10" fill="none" stroke="#505050" stroke-width="2.1"/></svg>
<svg style="left:607.5px;top:326.5px" width="16" height="16" viewBox="0 0 16 16"><polyline points="6.10,4.90 9.90,8.00 6.10,11.10" fill="none" stroke="#505050" stroke-width="2.1"/></svg>
</div>
<div class="sunk" style="left:9px;top:671px;width:76px;height:23px;background:#c0ffff;"></div>
<span class="t" style="left:42.30px;top:671.78px;font-size:13.5px;line-height:15.08px;transform:scaleX(0.8582);transform-origin:0 0;">10</span><div class="sunk" style="left:88px;top:671px;width:250px;height:13px;background:#fff;"></div>
<div class="btn" style="left:344px;top:671px;width:53px;height:15px;"></div>
<div style="left:346px;top:673px;width:49px;height:11px;overflow:hidden;"><span class="t" style="left:1.60px;top:-3.22px;font-size:13.5px;line-height:15.08px;transform:scaleX(0.8000);transform-origin:50% 0;">Suchen</span></div>
<span class="t" style="left:402.70px;top:670.28px;font-size:13.5px;line-height:15.08px;transform:scaleX(0.7602);transform-origin:0 0;">Items</span><div class="sunk" style="left:438px;top:671px;width:57px;height:14px;background:#fff;"></div>
<span class="t" style="left:458.98px;top:671.78px;font-size:13.5px;line-height:15.08px;color:#b41c1c;transform:scaleX(0.8000);transform-origin:50% 0;">10</span><div class="sunk" style="left:500px;top:666px;width:37px;height:24px;background:#c0ffff;"></div>
<div style="left:502px;top:668px;width:33px;height:20px;overflow:hidden;"><span class="t" style="left:0.50px;top:-1.22px;font-size:13.5px;line-height:15.08px;transform:scaleX(0.7892);transform-origin:0 0;">ehlend</span></div>
<div class="btn" style="left:537px;top:671px;width:44px;height:15px;"></div>
<div style="left:539px;top:673px;width:40px;height:11px;overflow:hidden;"><span class="t" style="left:2.00px;top:-8.22px;font-size:13.5px;line-height:15.08px;transform:scaleX(0.8301);transform-origin:0 0;">Drücke</span><span class="t" style="left:12.50px;top:5.78px;font-size:13.5px;line-height:15.08px;transform:scaleX(0.9197);transform-origin:0 0;">für</span></div>
<div class="btn" style="left:581px;top:671px;width:35px;height:15px;"></div>
<div style="left:583px;top:673px;width:31px;height:11px;overflow:hidden;"><span class="t" style="left:4.00px;top:-1.72px;font-size:13.5px;line-height:15.08px;transform:scaleX(0.8122);transform-origin:0 0;">Save</span></div>
<div style="left:587px;top:684px;width:7px;height:1px;background:#000"></div>
<div class="btn" style="left:616px;top:671px;width:30px;height:15px;"></div>
<div style="left:618px;top:673px;width:26px;height:11px;overflow:hidden;"><span class="t" style="left:3.50px;top:-1.72px;font-size:13.5px;line-height:15.08px;transform:scaleX(0.8211);transform-origin:0 0;">nde</span></div>
<div class="btn def" style="left:72px;top:697px;width:66px;height:37px;"></div>
<div style="left:76px;top:701px;width:58px;height:29px;overflow:hidden;"><span class="t" style="left:7.40px;top:-0.22px;font-size:13.5px;line-height:15.08px;transform:scaleX(0.8067);transform-origin:0 0;">Duplikate</span><span class="t" style="left:12.20px;top:12.78px;font-size:13.5px;line-height:15.08px;transform:scaleX(0.7883);transform-origin:0 0;">aus der</span><span class="t" style="left:20.00px;top:25.78px;font-size:13.5px;line-height:15.08px;transform:scaleX(0.6659);transform-origin:0 0;">Liste</span></div>
<div style="left:76px;top:701px;width:58px;height:29px;border:1px dotted #000"></div>
<div class="btn" style="left:138px;top:697px;width:72px;height:37px;"></div>
<div style="left:140px;top:699px;width:68px;height:33px;overflow:hidden;"><span class="t" style="left:3.30px;top:-4.12px;font-size:13.5px;line-height:15.08px;transform:scaleX(0.7941);transform-origin:0 0;">e Bestaende</span><span class="t" style="left:4.50px;top:8.88px;font-size:13.5px;line-height:15.08px;transform:scaleX(0.7938);transform-origin:0 0;">auf fehlende</span><span class="t" style="left:14.90px;top:21.88px;font-size:13.5px;line-height:15.08px;transform:scaleX(0.7949);transform-origin:0 0;">Dateien</span></div>
<div class="btn" style="left:210px;top:697px;width:60px;height:37px;"></div>
<div style="left:212px;top:699px;width:56px;height:33px;overflow:hidden;"><span class="t" style="left:3.10px;top:-4.12px;font-size:13.5px;line-height:15.08px;transform:scaleX(0.7851);transform-origin:0 0;">Fehlendes</span><span class="t" style="left:4.30px;top:8.88px;font-size:13.5px;line-height:15.08px;transform:scaleX(0.7636);transform-origin:0 0;">Rollmateri</span><span class="t" style="left:4.30px;top:21.88px;font-size:13.5px;line-height:15.08px;transform:scaleX(0.8028);transform-origin:0 0;">al suchen</span></div>
<div class="btn" style="left:270px;top:697px;width:77px;height:37px;"></div>
<div style="left:272px;top:699px;width:73px;height:33px;overflow:hidden;"><span class="t" style="left:2.80px;top:-4.12px;font-size:13.5px;line-height:15.08px;transform:scaleX(0.7982);transform-origin:0 0;">Ausgewaehlte</span><span class="t" style="left:20.50px;top:8.88px;font-size:13.5px;line-height:15.08px;transform:scaleX(0.7923);transform-origin:0 0;">Assets</span><span class="t" style="left:14.70px;top:21.88px;font-size:13.5px;line-height:15.08px;transform:scaleX(0.7871);transform-origin:0 0;">entfernen</span></div>
</div>
</div>
</body></html>
